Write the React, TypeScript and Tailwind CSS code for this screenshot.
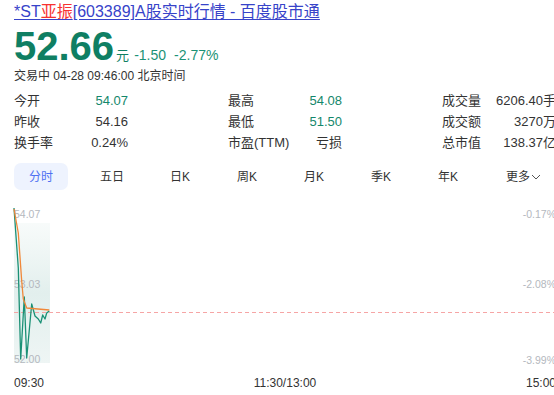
import React from "react";

const FONT = { fontFamily: '"Liberation Sans", Arial, "Noto Sans CJK SC", sans-serif' };

const green = "#14876b";

function Stat({ label, value, color }: { label: string; value: string; color?: string }) {
  return (
    <div className="flex justify-between items-center h-[21px]">
      <span className="text-[#333]">{label}</span>
      <span style={color ? { color } : undefined} className={color ? "" : "text-[#333]"}>
        {value}
      </span>
    </div>
  );
}

export default function App() {
  const greenPts =
    "14,207 18.3,267 20.7,358 24.3,296 26.7,357 31.7,303 35,315 38.3,318 40.7,322 42.7,314 45,318 46.7,312 49.3,310";
  const orangePts = "14,208 18.3,232 21.7,280 23.3,298 26.7,307 38,308 49.3,309";
  return (
    <div className="w-[554px] h-[395px] overflow-hidden bg-white" style={FONT}>
      <div className="w-[570px] px-[14px] pt-[1px]">
        <div className="text-[16px] leading-[22px] text-[#3743c9] underline underline-offset-[2px] whitespace-nowrap">
          *ST<span className="text-[#f73131]">亚振</span>[603389]A股实时行情 - 百度股市通
        </div>
        <div className="flex items-baseline mt-[5px] h-[36px]">
          <span className="text-[40px] font-bold leading-[36px]" style={{ color: "#0f7f63" }}>
            52.66
          </span>
          <span className="text-[13px] ml-[2px] text-[#0f7f63]">元</span>
          <span className="text-[14px] ml-[5px] text-[#1a9276]">-1.50</span>
          <span className="text-[14px] ml-[8px] text-[#1a9276]">-2.77%</span>
        </div>
        <div className="text-[12px] leading-[16px] mt-[4px] text-[#333] whitespace-nowrap">
          交易中 04-28 09:46:00 北京时间
        </div>
        <div className="grid grid-cols-3 gap-x-[100px] mt-[6px] text-[13px] w-[542px] whitespace-nowrap">
          <div>
            <Stat label="今开" value="54.07" color={green} />
            <Stat label="昨收" value="54.16" />
            <Stat label="换手率" value="0.24%" />
          </div>
          <div>
            <Stat label="最高" value="54.08" color={green} />
            <Stat label="最低" value="51.50" color={green} />
            <Stat label="市盈(TTM)" value="亏损" />
          </div>
          <div>
            <Stat label="成交量" value="6206.40手" />
            <Stat label="成交额" value="3270万" />
            <Stat label="总市值" value="138.37亿" />
          </div>
        </div>
        <div className="flex items-center mt-[10px] h-[27px] text-[12px] text-[#333] whitespace-nowrap">
          <div className="w-[54px] h-[27px] rounded-[7px] bg-[#eef3fe] text-[#4e71f2] flex items-center justify-center">
            分时
          </div>
          <div className="w-[54px] text-center ml-[17px]">五日</div>
          <div className="w-[54px] text-center ml-[14px]">日K</div>
          <div className="w-[54px] text-center ml-[13px]">周K</div>
          <div className="w-[54px] text-center ml-[13px]">月K</div>
          <div className="w-[54px] text-center ml-[13px]">季K</div>
          <div className="w-[54px] text-center ml-[13px]">年K</div>
          <div className="ml-[31px] flex items-center">
            更多
            <svg width="10" height="8" viewBox="0 0 10 8" className="ml-[1px]">
              <path d="M1 2 L5 6 L9 2" fill="none" stroke="#555" strokeWidth="1" />
            </svg>
          </div>
        </div>
      </div>
      <svg width="570" height="168" viewBox="0 200 570 168" className="block mt-[11px]">
        <defs>
          <linearGradient id="area" x1="0" y1="0" x2="0" y2="1">
            <stop offset="0" stopColor="#e6f1ef" stopOpacity="0.3" />
            <stop offset="0.5" stopColor="#e2efed" stopOpacity="1" />
            <stop offset="1" stopColor="#eef5f4" stopOpacity="1" />
          </linearGradient>
        </defs>
        <rect x="14" y="222" width="36" height="140" fill="url(#area)" />
        <line x1="14" y1="311.5" x2="556" y2="311.5" stroke="#f6a5a5" strokeWidth="1" strokeDasharray="4 3" />
        <g style={FONT} fontSize="10.5" fill="#b4b8be">
          <text x="14" y="216.5">54.07</text>
          <text x="14" y="287">53.03</text>
          <text x="14" y="362">52.00</text>
          <text x="556" y="216.5" textAnchor="end">-0.17%</text>
          <text x="556" y="287" textAnchor="end">-2.08%</text>
          <text x="556" y="362.5" textAnchor="end">-3.99%</text>
        </g>
        <polyline points={greenPts} fill="none" stroke="#1b9176" strokeWidth="1.3" strokeLinejoin="round" />
        <polyline points={orangePts} fill="none" stroke="#f0883a" strokeWidth="1.3" strokeLinejoin="round" />
      </svg>
      <div className="w-[570px] px-[14px] mt-[6px] flex justify-between text-[12px] leading-[16px] text-[#333]">
        <span className="w-[60px]">09:30</span>
        <span>11:30/13:00</span>
        <span className="w-[60px] text-right">15:00</span>
      </div>
    </div>
  );
}
